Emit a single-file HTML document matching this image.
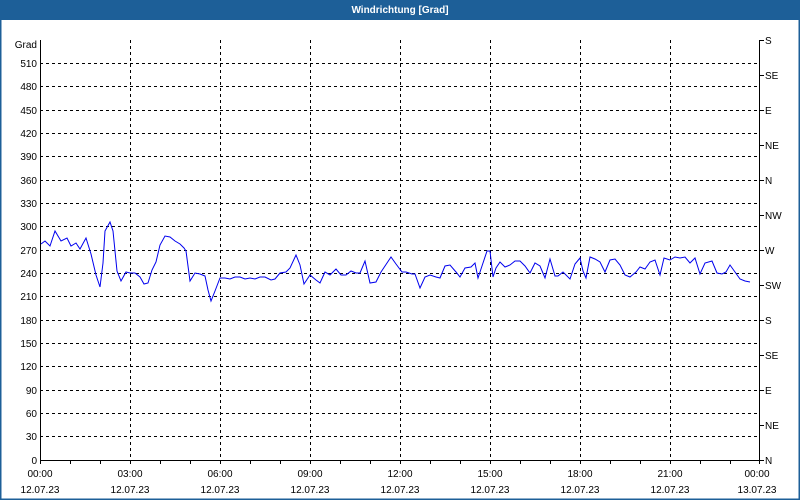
<!DOCTYPE html>
<html><head><meta charset="utf-8"><style>
html,body{margin:0;padding:0;width:800px;height:500px;overflow:hidden;background:#fff;}
</style></head><body>
<svg width="800" height="500" xmlns="http://www.w3.org/2000/svg" font-family="Liberation Sans, sans-serif" font-size="10">
<rect x="0" y="0" width="800" height="500" fill="#fff"/>
<rect x="0" y="0" width="800" height="20" fill="#1d5f98"/>
<rect x="0" y="0" width="1.5" height="500" fill="#1d5f98"/>
<rect x="798.5" y="0" width="1.5" height="500" fill="#1d5f98"/>
<rect x="0" y="498.5" width="800" height="1.5" fill="#1d5f98"/>
<text x="400" y="13" fill="#fff" font-weight="bold" text-anchor="middle" font-size="10">Windrichtung [Grad]</text>
<g stroke="#000" stroke-width="1" stroke-dasharray="3,3" shape-rendering="crispEdges">
<line x1="40" x2="760" y1="63.5" y2="63.5"/><line x1="40" x2="760" y1="86.5" y2="86.5"/><line x1="40" x2="760" y1="110.5" y2="110.5"/><line x1="40" x2="760" y1="133.5" y2="133.5"/><line x1="40" x2="760" y1="156.5" y2="156.5"/><line x1="40" x2="760" y1="180.5" y2="180.5"/><line x1="40" x2="760" y1="203.5" y2="203.5"/><line x1="40" x2="760" y1="226.5" y2="226.5"/><line x1="40" x2="760" y1="250.5" y2="250.5"/><line x1="40" x2="760" y1="273.5" y2="273.5"/><line x1="40" x2="760" y1="296.5" y2="296.5"/><line x1="40" x2="760" y1="320.5" y2="320.5"/><line x1="40" x2="760" y1="343.5" y2="343.5"/><line x1="40" x2="760" y1="366.5" y2="366.5"/><line x1="40" x2="760" y1="390.5" y2="390.5"/><line x1="40" x2="760" y1="413.5" y2="413.5"/><line x1="40" x2="760" y1="436.5" y2="436.5"/>
<line x1="130.5" x2="130.5" y1="40" y2="460"/><line x1="220.5" x2="220.5" y1="40" y2="460"/><line x1="310.5" x2="310.5" y1="40" y2="460"/><line x1="400.5" x2="400.5" y1="40" y2="460"/><line x1="490.5" x2="490.5" y1="40" y2="460"/><line x1="580.5" x2="580.5" y1="40" y2="460"/><line x1="670.5" x2="670.5" y1="40" y2="460"/>
</g>
<g stroke="#000" stroke-width="1" shape-rendering="crispEdges">
<line x1="40.5" x2="40.5" y1="40" y2="461"/>
<line x1="759.5" x2="759.5" y1="40" y2="461"/>
<line x1="40" x2="760" y1="460.5" y2="460.5"/>
<path d="M40.5 460v4M70.5 460v4M100.5 460v4M130.5 460v4M160.5 460v4M190.5 460v4M220.5 460v4M250.5 460v4M280.5 460v4M310.5 460v4M340.5 460v4M370.5 460v4M400.5 460v4M430.5 460v4M460.5 460v4M490.5 460v4M520.5 460v4M550.5 460v4M580.5 460v4M610.5 460v4M640.5 460v4M670.5 460v4M700.5 460v4M730.5 460v4M759.5 460v4"/>
<path d="M760 40.5h4M760 75.5h4M760 110.5h4M760 145.5h4M760 180.5h4M760 215.5h4M760 250.5h4M760 285.5h4M760 320.5h4M760 355.5h4M760 390.5h4M760 425.5h4M760 460.5h4"/>
</g>
<g text-anchor="end" fill="#000">
<text x="37" y="48">Grad</text>
<text x="37" y="67">510</text><text x="37" y="90">480</text><text x="37" y="114">450</text><text x="37" y="137">420</text><text x="37" y="160">390</text><text x="37" y="184">360</text><text x="37" y="207">330</text><text x="37" y="230">300</text><text x="37" y="254">270</text><text x="37" y="277">240</text><text x="37" y="300">210</text><text x="37" y="324">180</text><text x="37" y="347">150</text><text x="37" y="370">120</text><text x="37" y="394">90</text><text x="37" y="417">60</text><text x="37" y="440">30</text><text x="37" y="464">0</text>
</g>
<g fill="#000">
<text x="765" y="44">S</text><text x="765" y="79">SE</text><text x="765" y="114">E</text><text x="765" y="149">NE</text><text x="765" y="184">N</text><text x="765" y="219">NW</text><text x="765" y="254">W</text><text x="765" y="289">SW</text><text x="765" y="324">S</text><text x="765" y="359">SE</text><text x="765" y="394">E</text><text x="765" y="429">NE</text><text x="765" y="464">N</text>
</g>
<g text-anchor="middle" fill="#000">
<text x="40" y="477">00:00</text><text x="130" y="477">03:00</text><text x="220" y="477">06:00</text><text x="310" y="477">09:00</text><text x="400" y="477">12:00</text><text x="490" y="477">15:00</text><text x="580" y="477">18:00</text><text x="670" y="477">21:00</text><text x="757" y="477">00:00</text>
<text x="40" y="493">12.07.23</text><text x="130" y="493">12.07.23</text><text x="220" y="493">12.07.23</text><text x="310" y="493">12.07.23</text><text x="400" y="493">12.07.23</text><text x="490" y="493">12.07.23</text><text x="580" y="493">12.07.23</text><text x="670" y="493">12.07.23</text><text x="757" y="493">13.07.23</text>
</g>
<polyline fill="none" stroke="#0000ee" stroke-width="1" points="41,244 45,241 50,246 55,231 61,241 67,238 71,246 76,243 80,249 86,238 91,254 96,275 100,287 103,263 105,231 110,222 113,231 117,271 121,281 126,272 130,273 135,273 140,277 144,284 148,283 152,270 156,262 160,245 165,236 170,237 175,241 180,244 184,248 186,251 190,281 195,273 200,274 205,276 208,290 211,301 215,291 220,278 225,278 230,279 235,277 240,277 245,279 250,278 255,279 260,277 265,277 271,280 275,279 280,273 286,272 290,268 296,255 300,265 304,284 310,275 316,280 320,283 325,272 330,275 336,269 341,275 346,275 351,271 356,273 360,273 365,261 370,283 376,282 381,272 387,263 391,257 396,264 402,272 406,272 412,274 415,274 420,288 425,277 430,275 436,277 440,278 445,266 450,265 456,272 460,277 465,268 471,267 475,263 478,278 482,266 487,251 490,251 493,277 496,268 500,262 505,267 510,265 515,261 520,261 525,266 530,273 535,263 540,266 545,278 550,259 555,276 558,276 563,272 570,279 575,264 580,258 583,271 586,278 590,257 595,259 600,262 605,272 610,260 615,259 620,265 625,275 630,277 636,272 640,267 645,269 650,262 655,260 660,275 664,258 670,260 675,257 680,258 685,257 690,263 695,258 700,274 705,263 712,261 717,273 722,274 726,272 730,265 735,272 740,279 745,281 750,282"/>
</svg>
</body></html>
